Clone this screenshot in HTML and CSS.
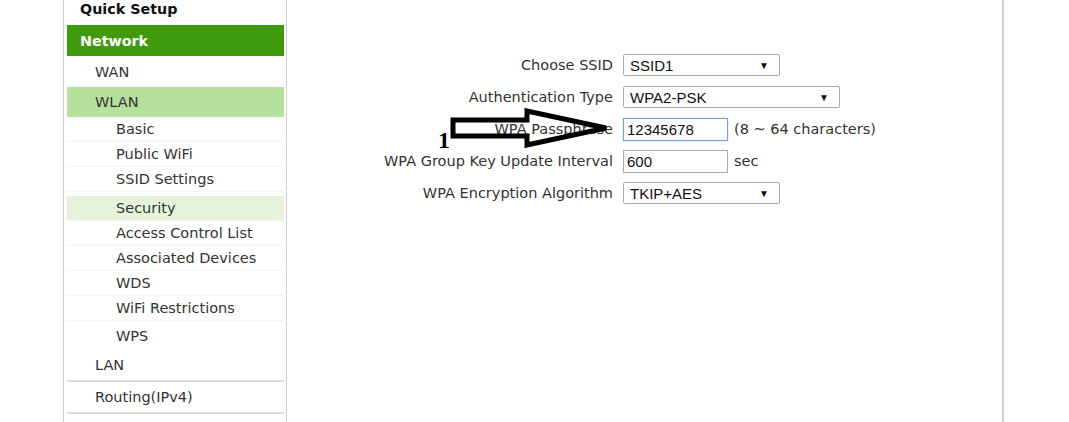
FILE: index.html
```html
<!DOCTYPE html>
<html>
<head>
<meta charset="utf-8">
<link rel="stylesheet" href="styles.css">
</head>
<body>
<div class="page">
  <nav class="sidebar">
    <div class="item top">Quick Setup</div>
    <div class="item top active">Network</div>
    <div class="item l1">WAN</div>
    <div class="item l1 open">WLAN</div>
    <div class="item l2">Basic</div>
    <div class="item l2">Public WiFi</div>
    <div class="item l2">SSID Settings</div>
    <div class="item l2 current">Security</div>
    <div class="item l2">Access Control List</div>
    <div class="item l2">Associated Devices</div>
    <div class="item l2">WDS</div>
    <div class="item l2">WiFi Restrictions</div>
    <div class="item l2 last">WPS</div>
    <div class="item l1 sep">LAN</div>
    <div class="item l1 sep">Routing(IPv4)</div>
    <div class="item top">Security</div>
  </nav>
  <main class="content">
    <div class="form">
      <div class="label">Choose SSID</div>
      <div class="field"><div class="select w156"><span>SSID1</span><span class="tri">▼</span></div></div>

      <div class="label">Authentication Type</div>
      <div class="field"><div class="select w216"><span>WPA2-PSK</span><span class="tri">▼</span></div></div>

      <div class="label pass">
        <span class="one">1</span>
        <svg class="arrow" width="162" height="40" viewBox="0 0 162 40">
          <path d="M3 12 H77 V3 L156 20 L77 37 V28 H3 Z" fill="none" stroke="#000" stroke-width="5" stroke-linejoin="miter"/>
        </svg>
        WPA Passphrase
      </div>
      <div class="field"><div class="input focus">12345678</div><span class="hint">(8 ~ 64 characters)</span></div>

      <div class="label">WPA Group Key Update Interval</div>
      <div class="field"><div class="input">600</div><span class="hint">sec</span></div>

      <div class="label">WPA Encryption Algorithm</div>
      <div class="field"><div class="select w156"><span>TKIP+AES</span><span class="tri">▼</span></div></div>
    </div>
  </main>
</div>
</body>
</html>
```

FILE: styles.css
```css
* { box-sizing: border-box; }
html, body { margin: 0; padding: 0; background: #fff; overflow: hidden; }
body {
  width: 1069px;
  height: 422px;
  font-family: "DejaVu Sans", Verdana, sans-serif;
  font-size: 14.5px;
  color: #333;
}
.page {
  display: flex;
  height: 422px;
  padding-left: 63px;
  overflow: hidden;
}
.sidebar {
  width: 224px;
  flex: none;
  margin-top: -7px;
  border-left: 1px solid #cfcfcf;
  border-right: 1px solid #cfcfcf;
  padding: 0 2px 0 3px;
  height: 440px;
}
.item {
  display: flex;
  align-items: center;
  white-space: nowrap;
}
.item.top {
  height: 32px;
  padding-left: 13px;
  font-weight: bold;
  color: #111;
  font-size: 14.3px;
}
.item.top.active {
  height: 31px;
  background: #3f9a0c;
  color: #fff;
}
.item.l1 {
  height: 31px;
  padding-left: 28px;
  color: #333;
}
.item.l1.open {
  background: #b5e19c;
  height: 30px;
}
.item.l2 {
  height: 25px;
  padding-left: 49px;
  border-bottom: 1px solid #f3f3f3;
  color: #333;
}
.item.l2.current {
  background: #e4f3d9;
  margin-top: 4px;
}
.item.l2.last { border-bottom: none; height: 29px; }
.item.sep { border-bottom: 2px solid #dcdcdc; height: 32px; }

.content {
  flex: 1;
  height: 422px;
  margin-right: 65px;
  border-right: 2px solid #cfcfcf;
}
.form {
  display: grid;
  grid-template-columns: 326px auto;
  column-gap: 10px;
  row-gap: 10px;
  margin-top: 54px;
}
.label {
  height: 22px;
  display: flex;
  align-items: center;
  justify-content: flex-end;
  color: #333;
  white-space: nowrap;
  position: relative;
}
.field {
  height: 22px;
  display: flex;
  align-items: center;
  gap: 6px;
}
.select {
  height: 22px;
  border: 1px solid #a9a9a9;
  border-radius: 2px;
  display: flex;
  align-items: center;
  justify-content: space-between;
  padding: 0 10px 0 6px;
  font-family: "Liberation Sans", Arial, sans-serif;
  font-size: 15px;
  color: #111;
  background: #fff;
}
.w156 { width: 157px; }
.w216 { width: 217px; }
.tri { font-size: 10px; color: #111; }
.input {
  width: 105px;
  height: 23px;
  border: 1px solid #a9a9a9;
  padding: 0 3px;
  display: flex;
  align-items: center;
  font-family: "Liberation Sans", Arial, sans-serif;
  font-size: 15px;
  color: #111;
}
.input.focus {
  border-color: #6fa0d8;
  box-shadow: 0 0 1px #8bb4e6;
}
.hint { color: #333; }
.arrow {
  position: absolute;
  left: 163px;
  top: -10px;
}
.one {
  position: absolute;
  left: 151px;
  top: 10px;
  font-family: "Liberation Serif", "Times New Roman", serif;
  font-weight: bold;
  font-size: 24px;
  color: #000;
  line-height: 1;
}
```
